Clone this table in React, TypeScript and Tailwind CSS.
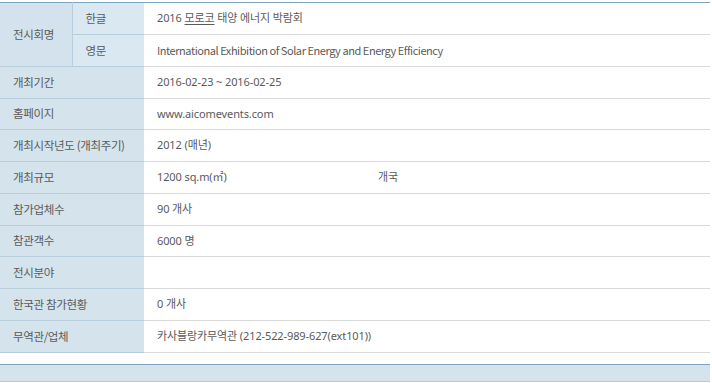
import React from "react";

const cjk = '"Noto Sans CJK KR", "Noto Sans", sans-serif';
const mixed = '"Noto Sans", "Noto Sans CJK KR", sans-serif';

const labelCell =
  "bg-[#d5e3ed] border-b border-[#b9cedc] pl-[13px] text-left font-normal text-[#5a5a5a] text-[11.5px] tracking-[-0.03em]";
const valueCell =
  "bg-white border-b border-[#d9d9d9] pl-[13px] text-[#5a5a5a] tracking-[-0.01em]";

type Row = { label: string; value: React.ReactNode; h: string };

const rows: Row[] = [
  { label: "개최기간", value: "2016-02-23 ~ 2016-02-25", h: "h-[32px]" },
  { label: "홈페이지", value: "www.aicomevents.com", h: "h-[31px]" },
  { label: "개최시작년도 (개최주기)", value: "2012 (매년)", h: "h-[32px]" },
  {
    label: "개최규모",
    value: (
      <div className="flex">
        <span className="w-[221px]">1200 sq.m(㎡)</span>
        <span>개국</span>
      </div>
    ),
    h: "h-[32px]",
  },
  { label: "참가업체수", value: "90 개사", h: "h-[32px]" },
  { label: "참관객수", value: "6000 명", h: "h-[31px]" },
  { label: "전시분야", value: "", h: "h-[32px]" },
  { label: "한국관 참가현황", value: "0 개사", h: "h-[32px]" },
  { label: "무역관/업체", value: "카사블랑카무역관 (212-522-989-627(ext101))", h: "h-[32px]" },
];

export default function App() {
  return (
    <div className="w-[712px] h-[383px] bg-white pt-[2px] text-[11px]">
      <table className="w-[710px] border-collapse table-fixed border-t border-[#7fa5be]">
        <colgroup>
          <col className="w-[72px]" />
          <col className="w-[72px]" />
          <col />
        </colgroup>
        <tbody>
          <tr className="h-[32px]">
            <th
              rowSpan={2}
              style={{ fontFamily: cjk }}
              className="bg-[#d3e2ec] border-b border-r border-[#b9cedc] pl-[13px] text-left font-normal text-[#5a5a5a] text-[11.5px] tracking-[-0.03em]"
            >
              전시회명
            </th>
            <th
              style={{ fontFamily: cjk }}
              className="bg-[#dae8f1] border-b border-[#b9cedc] pl-[13px] text-left font-normal text-[#5a5a5a] text-[11.5px] tracking-[-0.03em]"
            >
              한글
            </th>
            <td className={valueCell} style={{ fontFamily: mixed }}>
              2016 <span className="underline underline-offset-2">모로코</span> 태양 에너지 박람회
            </td>
          </tr>
          <tr className="h-[32px]">
            <th
              style={{ fontFamily: cjk }}
              className="bg-[#dae8f1] border-b border-[#b9cedc] pl-[13px] text-left font-normal text-[#5a5a5a] text-[11.5px] tracking-[-0.03em]"
            >
              영문
            </th>
            <td className="bg-white border-b border-[#d9d9d9] pl-[13px] text-[#5a5a5a] tracking-[-0.04em]" style={{ fontFamily: cjk }}>
              International Exhibition of Solar Energy and Energy Efficiency
            </td>
          </tr>
          {rows.map((r) => (
            <tr key={r.label} className={r.h}>
              <th colSpan={2} className={labelCell} style={{ fontFamily: cjk }}>
                {r.label}
              </th>
              <td className={valueCell} style={{ fontFamily: mixed }}>
                {r.value}
              </td>
            </tr>
          ))}
        </tbody>
      </table>
      <div className="mt-[11px] w-[710px] h-[18px] bg-[#d5e3ed] border-t border-[#7fa5be] border-b border-b-[#b9cedc]" />
    </div>
  );
}
